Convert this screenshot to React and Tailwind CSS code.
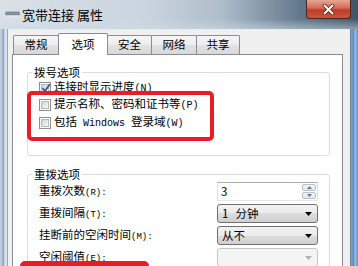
import React from 'react';

const mono = "font-['Liberation_Mono',monospace] text-[10px]";

const Checkbox = ({ checked }) => (
  <div className="w-[12px] h-[12px] shrink-0 border border-[#8e8f8f] bg-white p-[1px]">
    <div className="relative w-full h-full border border-[#b4b9bf] bg-[linear-gradient(135deg,#cdd1d6,#eef0f2_70%,#f8f8f8)]">
      {checked && (
        <svg className="absolute -left-[1px] -top-[2px]" width="10" height="10" viewBox="0 0 10 10">
          <path d="M1.5 5.2 L4 8 L8.8 1.2" fill="none" stroke="#3f5584" strokeWidth="1.8" />
        </svg>
      )}
    </div>
  </div>
);

const CheckRow = ({ checked, children }) => (
  <div className="flex items-center h-[17px] gap-[3px]">
    <Checkbox checked={checked} />
    <span className="whitespace-nowrap leading-none">{children}</span>
  </div>
);

const Arrow = ({ color }) => (
  <svg width="7" height="4" viewBox="0 0 7 4">
    <path d="M0 0 H7 L3.5 4 Z" fill={color} />
  </svg>
);

const Dropdown = ({ children, disabled }) => (
  <div
    className={
      disabled
        ? 'w-[101px] h-full rounded-[3px] border border-[#c3c7ca] bg-[#f4f4f4] flex items-center pl-[4px] pr-[5px]'
        : 'w-[101px] h-full rounded-[3px] border border-[#707070] bg-[linear-gradient(#f2f2f2,#ebebeb_50%,#dddddd_50%,#cfcfcf)] flex items-center pl-[4px] pr-[5px]'
    }
  >
    <div className="flex-1 flex items-center whitespace-nowrap">{children}</div>
    <Arrow color={disabled ? '#b0b0b0' : '#000'} />
  </div>
);

const Tab = ({ label, active, width }) => (
  <div
    className={
      active
        ? 'relative z-10 -ml-px -mb-px h-[22px] flex items-center justify-center border border-b-0 border-[#898c95] bg-white rounded-t-[2px]'
        : 'relative -ml-px first:ml-0 h-[19px] flex items-center justify-center border border-b-0 border-[#898c95] bg-[linear-gradient(#f6f6f6,#ececec_50%,#e2e2e2_50%,#d8d8d8)] rounded-t-[2px]'
    }
    style={{ width }}
  >
    <span className="text-[11.5px] leading-none">{label}</span>
  </div>
);

const SettingRow = ({ label, mn, children }) => (
  <div className="flex items-center h-[19px]">
    <div className="w-[178px] whitespace-nowrap leading-none">
      {label}
      <span className="font-['Liberation_Mono',monospace] text-[9px]">({mn}):</span>
    </div>
    {children}
  </div>
);

export default function App() {
  return (
    <div className="relative w-[358px] h-[266px] overflow-hidden flex flex-col bg-[#b9cadb] font-['Noto_Sans_CJK_SC',sans-serif] text-[11.5px] text-black">
      {/* title bar */}
      <div className="h-[29px] shrink-0 flex items-start bg-[linear-gradient(180deg,transparent_65%,rgba(205,218,230,0.55)),linear-gradient(90deg,#d8e0e8_0%,#cbd5df_40%,#aebdca_62%,#62788a_84%,#3f5567_100%)]">
        <div className="h-[28px] flex items-center pl-[5px] gap-[2px]">
          <svg width="15" height="6" viewBox="0 0 15 6">
            <rect x="0.5" y="1" width="14" height="3" rx="1" fill="#8b96a2" stroke="#5f6b78" strokeWidth="0.6" />
            <rect x="1.5" y="4.5" width="12" height="1" fill="#e8edf2" />
          </svg>
          <span className="text-[13px] leading-none whitespace-nowrap">宽带连接 属性</span>
        </div>
        <div className="ml-auto mr-[7px] w-[45px] h-[19px] rounded-b-[4px] border border-t-0 border-[#4e2621] bg-[linear-gradient(#e9a594,#d36a55_45%,#bd3e28_55%,#c9553c)] flex items-center justify-center">
          <svg width="13" height="11" viewBox="0 0 13 11">
            <path d="M2.5 1.5 L10.5 9.5 M10.5 1.5 L2.5 9.5" stroke="#5a1e16" strokeWidth="3.6" strokeLinecap="round" />
            <path d="M2.5 1.5 L10.5 9.5 M10.5 1.5 L2.5 9.5" stroke="#fff" strokeWidth="2" strokeLinecap="round" />
          </svg>
        </div>
      </div>

      <div className="flex-1 flex min-h-0">
        <div className="w-[8px] shrink-0 border-r border-[#97a6b5] bg-[linear-gradient(90deg,#c8d5e2,#b3c5d8_30%,#7c99bd_45%,#c9d5e1_65%,#e3e9ef)]" />

        {/* client */}
        <div className="flex-1 flex flex-col bg-[#f0f0f0] border-t border-[#e6ecf1] pt-[3px]">
          <div className="flex items-end ml-[5px]">
            <Tab label="常规" width={46} />
            <Tab label="选项" width={50} active />
            <Tab label="安全" width={45} />
            <Tab label="网络" width={46} />
            <Tab label="共享" width={44} />
          </div>

          <div className="ml-[4px] w-[331px] flex-1 bg-white border border-[#898c95] pt-[10px]">
            <fieldset className="ml-[14px] w-[303px] border border-[#d5dfe5] rounded-[3px]">
              <legend className="ml-[4px] px-[2px] leading-[14px]">拨号选项</legend>
              <div className="pl-[11px] pb-[24px]">
                <CheckRow checked>
                  连接时显示进度<span className={mono}>(N)</span>
                </CheckRow>
                <CheckRow>
                  提示名称、密码和证书等<span className={mono}>(P)</span>
                </CheckRow>
                <div className="mt-[1px]">
                  <CheckRow>
                    包括<span className={mono}> Windows </span>登录域<span className={mono}>(W)</span>
                  </CheckRow>
                </div>
              </div>
            </fieldset>

            <fieldset className="mt-[11px] ml-[14px] w-[303px] border border-[#d5dfe5] rounded-[3px]">
              <legend className="ml-[4px] px-[2px] leading-[14px]">重拨选项</legend>
              <div className="pl-[11px] pt-[1px] pb-[10px] flex flex-col gap-[3px]">
                <SettingRow label="重拨次数" mn="R">
                  <div className="w-[101px] h-full flex border border-[#abadb3] border-x-[#dbdfe6] border-b-[#e3e9ef] bg-white">
                    <div className="flex-1 flex items-center pl-[3px] leading-none">3</div>
                    <div className="w-[16px] flex flex-col gap-px p-px">
                      <div className="flex-1 flex items-center justify-center rounded-[2px] border border-[#b7c2cd] bg-[linear-gradient(#f3f6f9,#dfe6ec)]">
                        <svg width="5" height="3" viewBox="0 0 5 3"><path d="M0 3 H5 L2.5 0 Z" fill="#6b7885" /></svg>
                      </div>
                      <div className="flex-1 flex items-center justify-center rounded-[2px] border border-[#b7c2cd] bg-[linear-gradient(#f3f6f9,#dfe6ec)]">
                        <svg width="5" height="3" viewBox="0 0 5 3"><path d="M0 0 H5 L2.5 3 Z" fill="#6b7885" /></svg>
                      </div>
                    </div>
                  </div>
                </SettingRow>
                <SettingRow label="重拨间隔" mn="T">
                  <Dropdown>
                    <span>1</span>
                    <span className="ml-[7px]">分钟</span>
                  </Dropdown>
                </SettingRow>
                <SettingRow label="挂断前的空闲时间" mn="M">
                  <Dropdown>从不</Dropdown>
                </SettingRow>
                <SettingRow label="空闲阈值" mn="E">
                  <Dropdown disabled />
                </SettingRow>
              </div>
            </fieldset>
          </div>
        </div>

        <div className="w-[8px] shrink-0 border-l border-[#6f8194] bg-[linear-gradient(90deg,#7fa3cf,#5d8cc4_35%,#9dbde0_60%,#5d8cc4)]" />
      </div>

      {/* red highlight boxes */}
      <div className="absolute left-[27px] top-[91px] w-[187px] h-[50px] border-[4px] border-[#ec1c24] rounded-[5px]" />
      <div className="absolute left-[20px] top-[261px] w-[129px] h-[30px] border-[5px] border-[#ec1c24] rounded-[5px]" />
    </div>
  );
}
